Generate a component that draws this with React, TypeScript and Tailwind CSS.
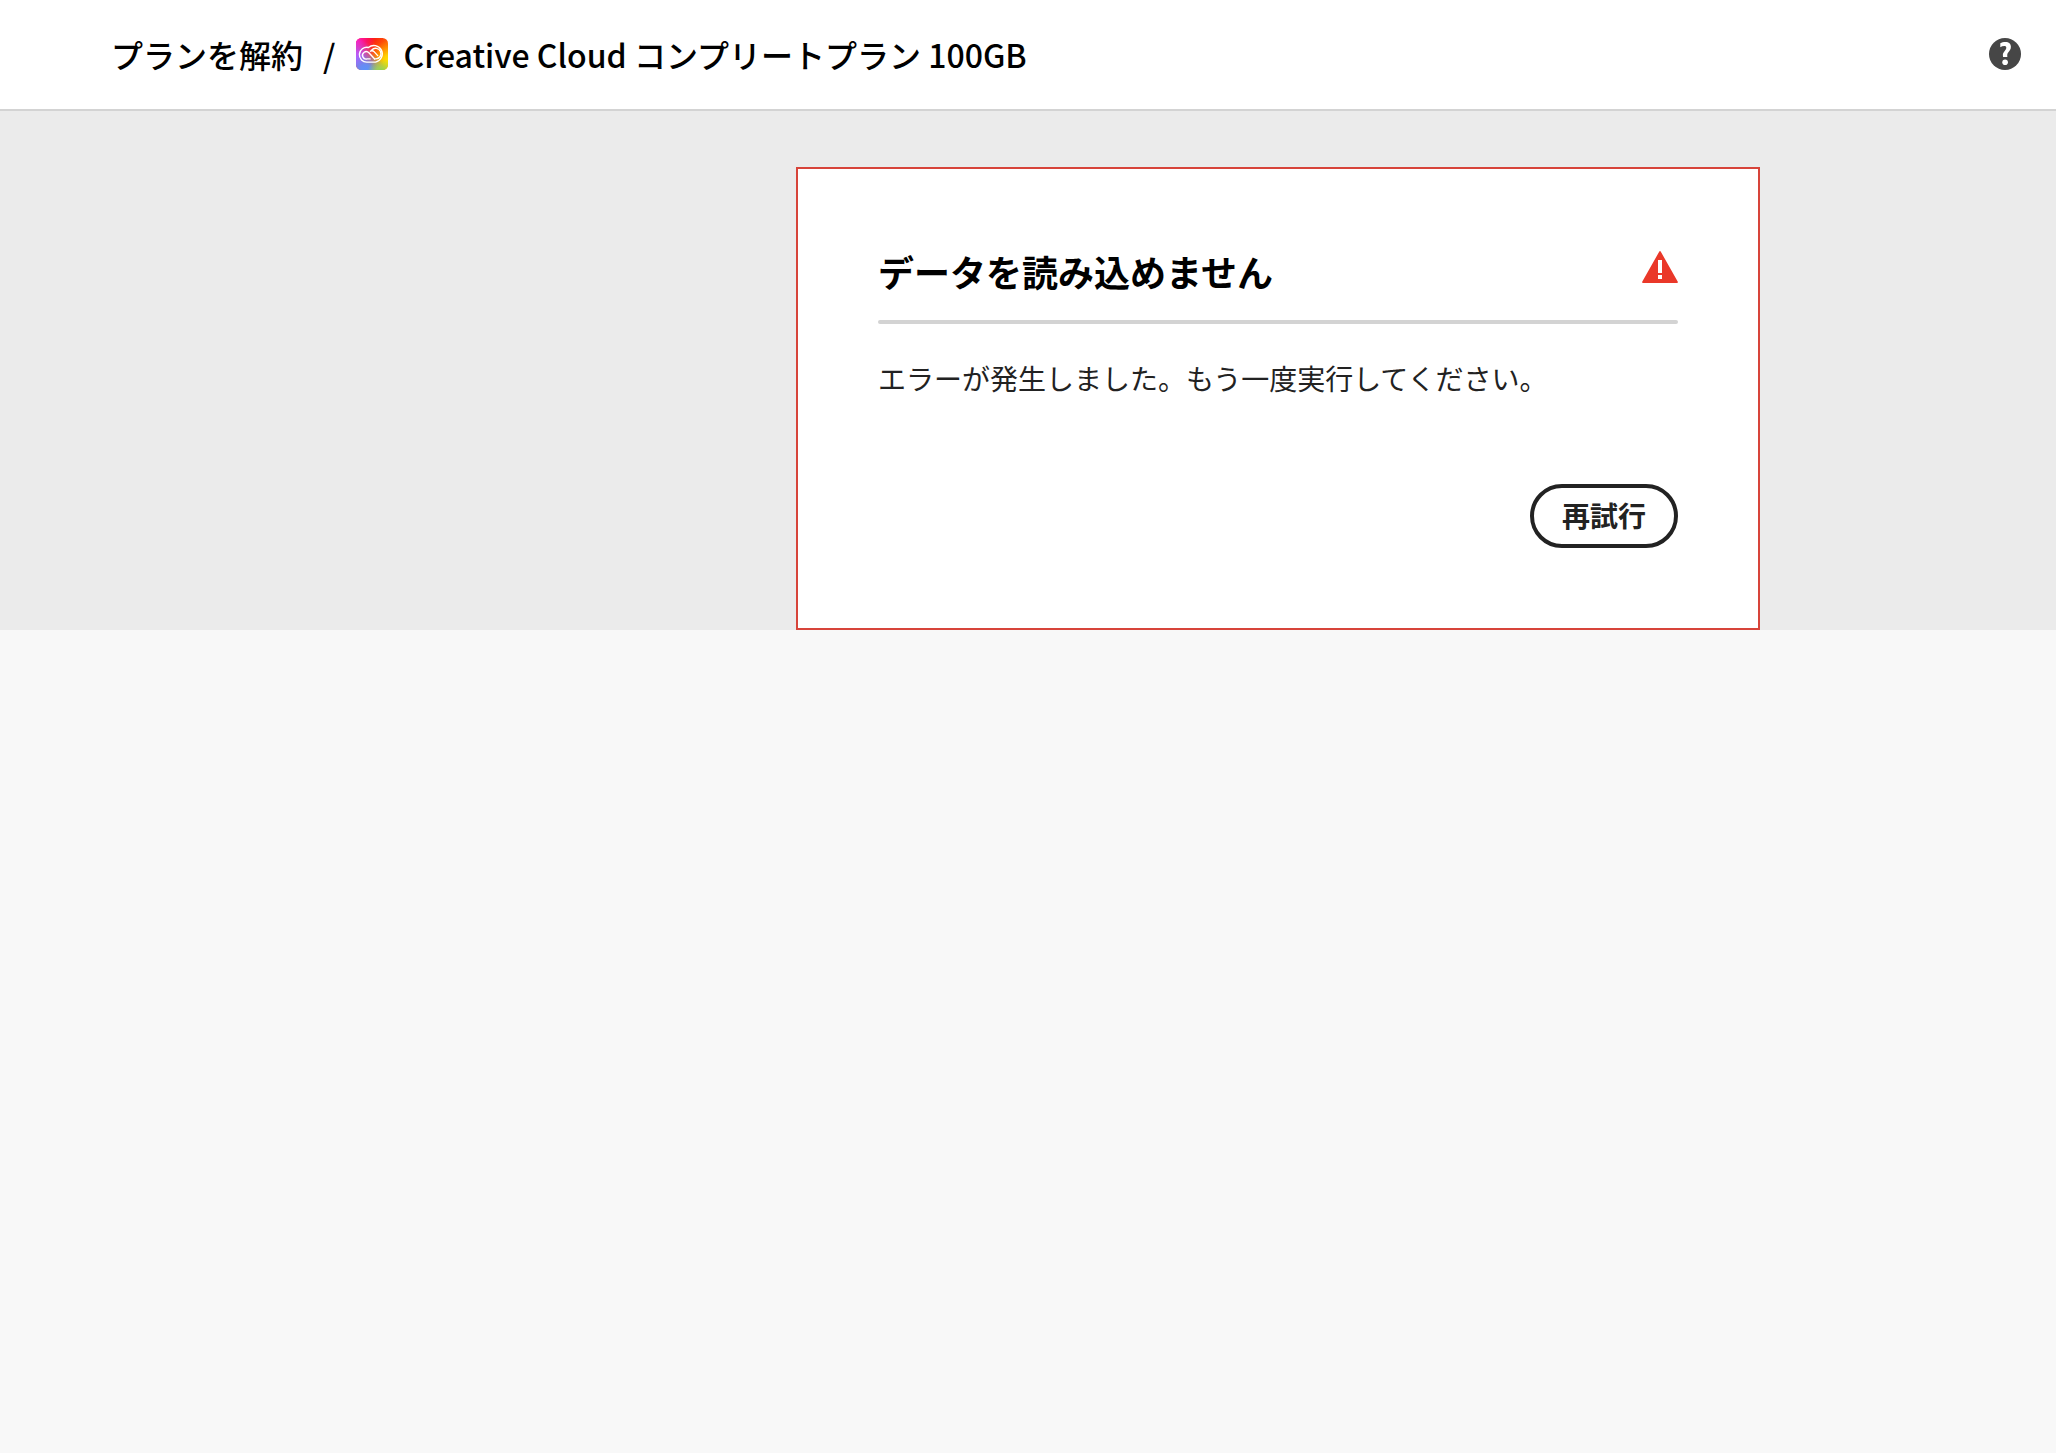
const CreativeCloudIcon = () => (
  <svg viewBox="0 0 32 32" className="size-8 shrink-0" aria-hidden="true">
    <defs>
      <clipPath id="cc-tile">
        <rect width="32" height="32" rx="5.5" />
      </clipPath>
      <radialGradient id="cc-magenta" cx="0" cy="0.08" r="0.6">
        <stop offset="0" stopColor="#ff1ccf" />
        <stop offset="1" stopColor="#ff1ccf" stopOpacity="0" />
      </radialGradient>
      <radialGradient id="cc-purple" cx="0" cy="0.62" r="0.6">
        <stop offset="0" stopColor="#b95cff" />
        <stop offset="0.3" stopColor="#b95cff" stopOpacity="0.9" />
        <stop offset="1" stopColor="#b95cff" stopOpacity="0" />
      </radialGradient>
      <radialGradient id="cc-blue" cx="0.3" cy="1.05" r="0.6">
        <stop offset="0" stopColor="#5a92ff" />
        <stop offset="0.35" stopColor="#5a92ff" stopOpacity="0.9" />
        <stop offset="1" stopColor="#5a92ff" stopOpacity="0" />
      </radialGradient>
      <radialGradient id="cc-green" cx="0.8" cy="1.1" r="0.45">
        <stop offset="0" stopColor="#6fd662" />
        <stop offset="0.4" stopColor="#9bdb50" stopOpacity="0.8" />
        <stop offset="1" stopColor="#9bdb50" stopOpacity="0" />
      </radialGradient>
      <radialGradient id="cc-yellow" cx="1.05" cy="0.72" r="0.65">
        <stop offset="0" stopColor="#ffe600" />
        <stop offset="0.3" stopColor="#ffd800" stopOpacity="0.9" />
        <stop offset="1" stopColor="#ff9500" stopOpacity="0" />
      </radialGradient>
      <linearGradient id="cc-base" x1="0.4" y1="0" x2="1" y2="0.5">
        <stop offset="0" stopColor="#fb0a12" />
        <stop offset="1" stopColor="#ff8a00" />
      </linearGradient>
    </defs>
    <g clipPath="url(#cc-tile)">
      <rect width="32" height="32" fill="url(#cc-base)" />
      <rect width="32" height="32" fill="url(#cc-magenta)" />
      <rect width="32" height="32" fill="url(#cc-yellow)" />
      <rect width="32" height="32" fill="url(#cc-purple)" />
      <rect width="32" height="32" fill="url(#cc-blue)" />
      <rect width="32" height="32" fill="url(#cc-green)" />
    </g>
    <g fill="none" stroke="#fff" strokeWidth="1.4" strokeLinecap="round" strokeLinejoin="round">
      <path d="M11.3 24.1H19.6A8.4 8.4 0 1 0 12.4 9.5A7.4 7.4 0 1 0 11.3 24.1Z" />
      <path d="M18.6 20.9L12.9 14.8A3.7 3.7 0 1 0 11.2 20.9H14.1" />
      <path d="M18.6 20.9H19.8A5.3 5.3 0 1 0 15.6 12.2" />
      <path d="M14.4 13.2C15.8 12.4 17.3 12.8 18.3 13.9L21.7 17.6" />
    </g>
  </svg>
);

const HelpIcon = () => (
  <svg viewBox="0 0 32 32" className="size-8" aria-hidden="true">
    <circle cx="16" cy="16" r="16" fill="#464646" />
    <path
      d="M11.3 9.2V5.3C12.8 4.5 14.5 4 16.4 4C20 4 21.9 6 21.9 8.8C21.9 11.2 20.8 12.6 19.4 14.2C18.4 15.4 18.1 16.2 18.3 18.1V19H14.1L13.9 17.8C13.7 15.9 14.3 14.5 15.7 12.9C16.8 11.6 17.3 10.8 17.3 9.7C17.3 8.5 16.6 8 15.3 8C13.8 8 12.5 8.5 11.3 9.2Z"
      fill="#fff"
    />
    <circle cx="16.1" cy="24.3" r="2.8" fill="#fff" />
  </svg>
);

const AlertIcon = () => (
  <svg viewBox="0 0 36 32" className="mt-0.5 h-8 w-9 shrink-0" role="img" aria-label="エラー">
    <path
      d="M17.3 0.5a0.8 0.8 0 0 1 1.4 0L35.8 30.8a0.8 0.8 0 0 1-0.7 1.2H0.9a0.8 0.8 0 0 1-0.7-1.2Z"
      fill="#ea3829"
    />
    <path d="M16 9h4v13h-4ZM16 24h4v4h-4Z" fill="#fff" />
  </svg>
);

const App = () => {
  return (
    <div className="min-h-screen bg-[#f8f8f8] font-['Noto_Sans_CJK_JP',sans-serif] text-black">
      <header className="flex h-[111px] items-center justify-between border-b-2 border-[#d3d3d3] bg-white pr-[35px] pb-px pl-[111px]">
        <h1 className="flex items-center text-[32px] leading-10 font-medium">
          <span>プランを解約</span>
          <span className="mx-5">/</span>
          <CreativeCloudIcon />
          <span className="ml-4">Creative Cloud コンプリートプラン 100GB</span>
        </h1>
        <button type="button" aria-label="ヘルプ" className="cursor-pointer">
          <HelpIcon />
        </button>
      </header>

      <main className="flex justify-center bg-[#ebebeb] pt-14 pl-[500px]">
        <section className="w-full max-w-[964px] border-2 border-[#d7443a] bg-white p-20">
          <div className="flex items-start justify-between">
            <h2 className="text-[36px] leading-11 font-bold">データを読み込めません</h2>
            <AlertIcon />
          </div>
          <hr className="mt-[27px] h-1 rounded-full border-0 bg-[#d3d3d3]" />
          <p className="mt-8 text-[28px] leading-11 text-[#222222]">
            エラーが発生しました。もう一度実行してください。
          </p>
          <div className="mt-21 flex justify-end">
            <button
              type="button"
              className="h-16 cursor-pointer rounded-full border-4 border-[#222222] px-7 pb-0.5 text-[28px] leading-8 font-bold text-[#222222]"
            >
              再試行
            </button>
          </div>
        </section>
      </main>
    </div>
  );
};

export default App;
